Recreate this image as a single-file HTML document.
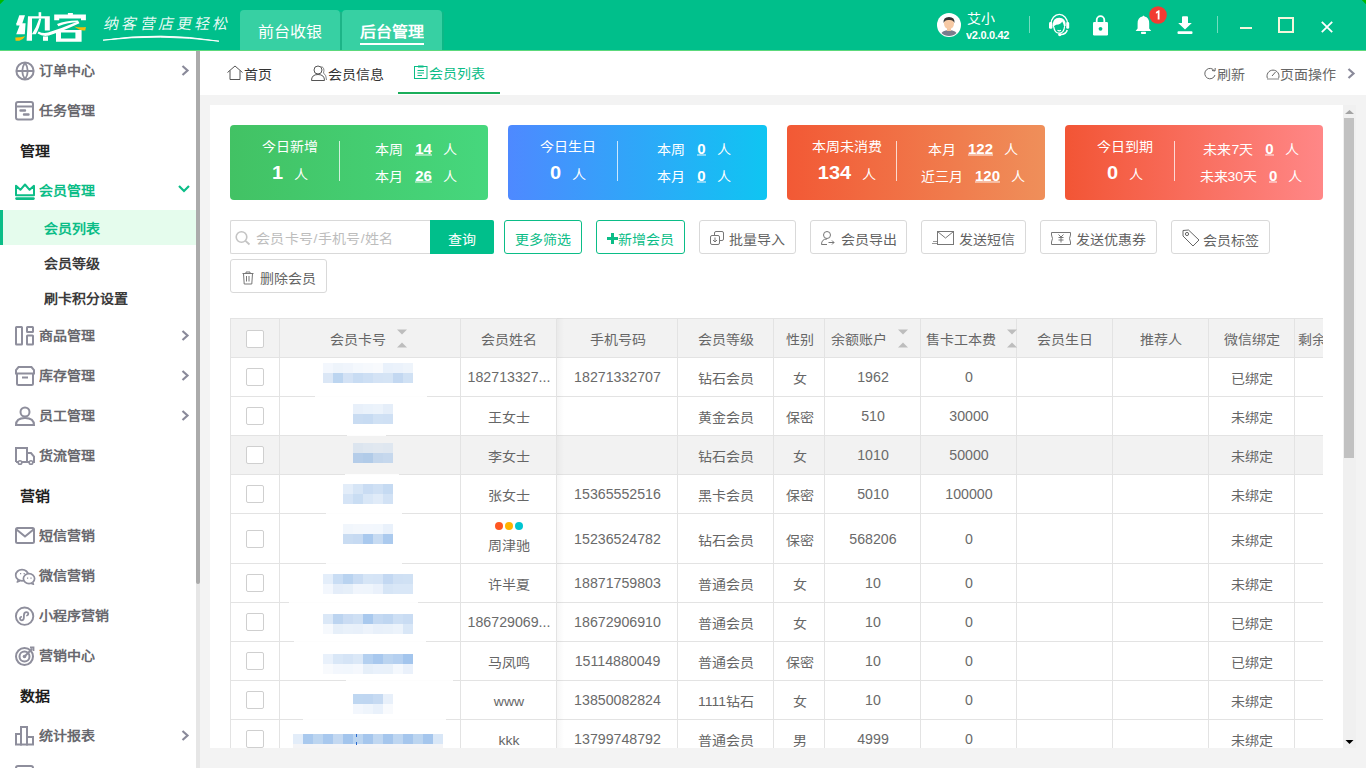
<!DOCTYPE html><html lang="zh-CN"><head><meta charset="utf-8"><title>纳客</title><style>
*{margin:0;padding:0;box-sizing:border-box}
html,body{width:1366px;height:768px;overflow:hidden;background:#f3f3f3;font-family:"Liberation Sans",sans-serif;}
.a{position:absolute}
.t{position:absolute;white-space:nowrap;line-height:20px;height:20px;transform:scaleY(.92)}
.c{text-align:center}
svg{position:absolute;overflow:visible}
</style></head><body>
<div class="a" style="left:0;top:0;width:1366px;height:50px;background:#00bf8b"></div>
<div class="a" style="left:0;top:50px;width:1366px;height:1px;background:#5cd97c"></div>
<svg style="left:0;top:0" width="1366" height="6"><path d="M0 0 H4.2 L0 4.2Z M1366 0 H1361.8 L1366 4.2Z" fill="#00b800"/></svg>
<svg style="left:0;top:0" width="95" height="50" viewBox="0 0 95 50"><path d="M19.3 15.3 H25 L22 24.3 H16.2Z" fill="#fff"/><path d="M16.4 23.2 H25.6 L24.8 34.2 H16.2 L19.6 25.6 H16.4Z" fill="#fff"/><path d="M15.3 37.6 Q20 37.4 25.2 36.2 Q23 39.8 19.3 40.8 H15.6Z" fill="#f5be0b"/><path d="M28 16.3 H49.8 V30.5 H44.8 V18.6 H32 V40.8 H26.6Z" fill="#fff"/><rect x="38.6" y="12.2" width="2.6" height="6" fill="#fff"/><path d="M39.2 18.4 H41.3 Q39.5 28 35.8 34.2 H31.9 Q36.5 27 39.2 18.4Z" fill="#fff"/><path d="M38.5 31.5 Q43 33.8 48 32.6 Q62 28 78.6 21.2 L79.4 23.3 Q63 31 49 35.6 Q43 37.2 37.6 33.6Z" fill="#fff"/><rect x="43" y="36.4" width="5" height="4.4" fill="#fff"/><rect x="67.9" y="13" width="5" height="2.2" fill="#fff"/><path d="M54.2 14.4 H85.9 V20.2 H81 V18.6 H59.2 V20.2 H54.2Z" fill="#fff"/><path d="M57 24 Q66 20.2 78.2 20.4 L77.8 22.3 Q68 22.3 58.4 26.2Z" fill="#fff"/><path d="M56 30 H81.6 V41.7 H56Z M61 32.5 V38.6 H75.4 V32.5Z" fill="#fff" fill-rule="evenodd"/><path d="M74.1 26.4 Q80 27.8 85.9 27 L85.3 30.6 Q80 30 79.1 29.4Z" fill="#f5be0b"/></svg>
<div class="t" style="left:102px;top:13px;height:22px;line-height:22px;font-size:15px;color:rgba(255,255,255,.92);letter-spacing:3.2px;font-family:'Liberation Serif',serif;transform:skewX(-12deg);transform-origin:0 100%">纳客营店更轻松</div>
<svg style="left:0;top:0" width="1" height="1"><path d="M103 40.2 Q160 31.5 219 41.2 Q160 33.6 103 40.2Z" stroke="#fff" stroke-width="0.9" fill="#fff"/></svg>
<div class="a" style="left:240px;top:10px;width:100px;height:40px;background:#37d0a3;border-radius:4px 4px 0 0"></div>
<div class="a" style="left:342px;top:10px;width:100px;height:40px;background:#37d0a3;border-radius:4px 4px 0 0"></div>
<div class="a" style="left:340px;top:12px;width:2px;height:38px;background:#1cb487"></div>
<div class="a" style="left:442px;top:12px;width:2px;height:38px;background:#0cb886"></div>
<div class="t c" style="left:240px;top:21px;width:100px;height:22px;line-height:22px;font-size:16px;color:#fff">前台收银</div>
<div class="t c" style="left:342px;top:21px;width:100px;height:22px;line-height:22px;font-size:16px;color:#fff;font-weight:700">后台管理</div>
<div class="a" style="left:360px;top:43px;width:64px;height:2px;background:#fff"></div>
<svg style="left:937px;top:13px" width="24" height="24" viewBox="0 0 24 24"><circle cx="12" cy="12" r="12" fill="#fff"/><clipPath id="av"><circle cx="12" cy="12" r="11"/></clipPath><g clip-path="url(#av)"><path d="M2 26 Q3 17 12 17 Q21 17 22 26Z" fill="#7a7d8c"/><rect x="10" y="13" width="4" height="5" fill="#f3c5a0"/><ellipse cx="12" cy="10.5" rx="5" ry="5.5" fill="#f6c9a4"/><path d="M6.5 10 Q6 4 12 4 Q18 4 17.5 10 Q16 6.5 12 7 Q8 6.5 6.5 10Z" fill="#333"/></g></svg>
<div class="t" style="left:967px;top:8px;height:20px;line-height:20px;font-size:14px;color:#fff">艾小</div>
<div class="t" style="left:966px;top:28px;height:14px;line-height:14px;font-size:11px;color:#fff;font-weight:700;letter-spacing:-0.3px">v2.0.0.42</div>
<div class="a" style="left:1029px;top:16px;width:1px;height:17px;background:rgba(255,255,255,.45)"></div>
<div class="a" style="left:1217px;top:16px;width:1px;height:17px;background:rgba(255,255,255,.45)"></div>
<svg style="left:1048px;top:13px" width="22" height="24" viewBox="0 0 22 24"><path d="M3 11 A8.3 9.6 0 0 1 19.6 11" stroke="#fff" stroke-width="1.3" fill="none"/><rect x="1" y="9" width="3.4" height="6.8" rx="1.4" fill="#fff"/><rect x="18.2" y="9" width="3" height="6.8" rx="1.4" fill="#fff"/><path d="M4.6 13 Q4.6 4.8 11.2 4.8 Q17.8 4.8 17.8 12.5 L16.2 14.5 Q15.8 11 14.2 8.6 Q13 11.6 8.2 11.8 Q6 12.2 5.6 14.8Z" fill="#fff"/><path d="M5.8 14 Q6.5 20 11.2 20.2 Q15.8 20 16.5 14" stroke="#fff" stroke-width="1.3" fill="none"/><path d="M9.5 17.3 Q11.2 18.4 12.9 17.3" stroke="#fff" stroke-width="1.2" fill="none"/><path d="M19.2 17 Q18.2 21.2 12.5 21.6" stroke="#fff" stroke-width="1.5" fill="none"/><circle cx="11.8" cy="21.6" r="1.7" fill="#fff"/></svg>
<svg style="left:1092px;top:15px" width="17" height="21" viewBox="0 0 17 21"><path d="M4.7 8 V5 A3.8 3.8 0 0 1 12.3 5 V8" stroke="#fff" stroke-width="1.8" fill="none"/><rect x="1" y="7" width="15" height="13.4" rx="1.2" fill="#fff"/><circle cx="8.5" cy="13.8" r="1.9" fill="#00bf8b"/></svg>
<svg style="left:1135px;top:15px" width="17" height="20" viewBox="0 0 17 20"><path d="M8.5 0.6 L9.6 1.6 Q14.2 2.6 14.2 8.5 V13.5 L16.2 15.9 H0.6 L2.6 13.5 V8.5 Q2.6 2.6 7.4 1.6Z" fill="#fff"/><rect x="6" y="16.8" width="5" height="2.2" rx="0.8" fill="#fff"/></svg>
<svg style="left:1148.5px;top:6px" width="18" height="18" viewBox="0 0 18 18"><circle cx="9" cy="9" r="8.8" fill="#f23b32"/><path d="M6.9 6 L9.5 4.3 H10.5 V13.4 H8.7 V6.7 L6.9 7.7Z" fill="#fff"/></svg>
<svg style="left:1177px;top:16px" width="16" height="18" viewBox="0 0 16 18"><path d="M5 1.2 Q5 0.3 6 0.3 H10 Q11 0.3 11 1.2 V7 H14.8 L8 13.6 L1.2 7 H5Z" fill="#fff"/><rect x="0.5" y="15.3" width="15" height="2.8" rx="1" fill="#fff"/></svg>
<div class="a" style="left:1240px;top:27px;width:12px;height:2px;background:#f3f7dc"></div>
<div class="a" style="left:1278px;top:17px;width:16px;height:16px;border:2px solid #f3f7dc"></div>
<svg style="left:1321px;top:21px" width="12" height="12" viewBox="0 0 12 12"><path d="M0.8 0.8 L11.2 11.2 M11.2 0.8 L0.8 11.2" stroke="#fff" stroke-width="1.8"/></svg>
<div class="a" style="left:0;top:51px;width:196px;height:717px;background:#fff"></div>
<div class="a" style="left:196px;top:51px;width:4px;height:717px;background:#e6e6e6"></div>
<div class="a" style="left:196px;top:51px;width:4px;height:533px;background:#ababab;border-radius:0 0 2px 2px"></div>
<svg style="left:15px;top:61px" width="20" height="20" viewBox="0 0 20 20"><circle cx="10" cy="10" r="8.6" stroke="#8e8e9c" stroke-width="2" fill="none"/><path d="M1.5 10 H18.5 M10 1.5 Q4.5 10 10 18.5 M10 1.5 Q15.5 10 10 18.5" stroke="#8e8e9c" stroke-width="1.8" fill="none"/></svg>
<div class="t" style="left:39px;top:60px;font-size:14px;font-weight:700;color:#68686e">订单中心</div>
<svg style="left:181px;top:65px" width="9" height="11" viewBox="0 0 9 11"><path d="M1.5 1 L6.5 5.5 L1.5 10" stroke="#8a8a9a" stroke-width="2.2" fill="none"/></svg>
<svg style="left:15px;top:101px" width="20" height="20" viewBox="0 0 20 20"><rect x="1" y="1" width="17" height="17.5" rx="2" stroke="#8e8e9c" stroke-width="2" fill="none"/><path d="M1 5.5 H18" stroke="#8e8e9c" stroke-width="2"/><path d="M5.5 9.5 H10 M9 13.5 H13.5" stroke="#8e8e9c" stroke-width="2.4" stroke-linecap="round"/></svg>
<div class="t" style="left:39px;top:100px;font-size:14px;font-weight:700;color:#68686e">任务管理</div>
<div class="t" style="left:20px;top:141px;font-size:15px;font-weight:700;color:#1e1e1e;transform:scaleY(.88);transform-origin:0 17px">管理</div>
<svg style="left:15px;top:183px" width="20" height="20" viewBox="0 0 20 20"><path d="M1 12.2 V2.8 L5.4 6.8 L10 1.5 L14.6 6.8 L19 2.8 V12.2Z" stroke="#0bbd87" stroke-width="2" fill="none" stroke-linejoin="round"/><rect x="0.2" y="14.2" width="19.6" height="2.7" rx="1.3" fill="#0bbd87"/></svg>
<div class="t" style="left:39px;top:180px;font-size:14px;font-weight:700;color:#0bbd87">会员管理</div>
<svg style="left:178px;top:185px" width="12" height="8" viewBox="0 0 12 8"><path d="M1 1 L6 6 L11 1" stroke="#0bbd87" stroke-width="2.2" fill="none"/></svg>
<div class="a" style="left:0;top:210px;width:196px;height:35px;background:#e5fced"></div>
<div class="a" style="left:0;top:210px;width:3px;height:35px;background:#0bbd87"></div>
<div class="t" style="left:44px;top:218px;font-size:14px;font-weight:700;color:#0bbd87">会员列表</div>
<div class="t" style="left:44px;top:253px;font-size:14px;font-weight:700;color:#3a3a3a">会员等级</div>
<div class="t" style="left:44px;top:288px;font-size:14px;font-weight:700;color:#3a3a3a">刷卡积分设置</div>
<svg style="left:15px;top:326px" width="20" height="20" viewBox="0 0 20 20"><rect x="1" y="1" width="6" height="17.5" rx="0.5" stroke="#8e8e9c" stroke-width="2" fill="none"/><rect x="12" y="1" width="6" height="5" rx="0.5" stroke="#8e8e9c" stroke-width="2" fill="none"/><rect x="12" y="9.5" width="6" height="9" rx="0.5" stroke="#8e8e9c" stroke-width="2" fill="none"/></svg>
<div class="t" style="left:39px;top:325px;font-size:14px;font-weight:700;color:#68686e">商品管理</div>
<svg style="left:181px;top:330px" width="9" height="11" viewBox="0 0 9 11"><path d="M1.5 1 L6.5 5.5 L1.5 10" stroke="#8a8a9a" stroke-width="2.2" fill="none"/></svg>
<svg style="left:15px;top:366px" width="20" height="20" viewBox="0 0 20 20"><path d="M2 7 V17.5 Q2 19 3.5 19 H16.5 Q18 19 18 17.5 V7" stroke="#8e8e9c" stroke-width="2" fill="none"/><path d="M1 7.5 V4 L3.5 1 H16.5 L19 4 V7.5Z" stroke="#8e8e9c" stroke-width="2" fill="none"/><path d="M7 11.5 H13" stroke="#8e8e9c" stroke-width="2"/></svg>
<div class="t" style="left:39px;top:365px;font-size:14px;font-weight:700;color:#68686e">库存管理</div>
<svg style="left:181px;top:370px" width="9" height="11" viewBox="0 0 9 11"><path d="M1.5 1 L6.5 5.5 L1.5 10" stroke="#8a8a9a" stroke-width="2.2" fill="none"/></svg>
<svg style="left:15px;top:406px" width="20" height="20" viewBox="0 0 20 20"><circle cx="10" cy="6" r="4.5" stroke="#8e8e9c" stroke-width="2" fill="none"/><path d="M1 19 Q1 12 10 12 Q19 12 19 19Z" stroke="#8e8e9c" stroke-width="2" fill="none"/></svg>
<div class="t" style="left:39px;top:405px;font-size:14px;font-weight:700;color:#68686e">员工管理</div>
<svg style="left:181px;top:410px" width="9" height="11" viewBox="0 0 9 11"><path d="M1.5 1 L6.5 5.5 L1.5 10" stroke="#8a8a9a" stroke-width="2.2" fill="none"/></svg>
<svg style="left:15px;top:446px" width="20" height="20" viewBox="0 0 20 20"><path d="M1 16 V2 H12 V16" stroke="#8e8e9c" stroke-width="2" fill="none"/><path d="M12 7 H16 L19 10.5 V16 H17" stroke="#8e8e9c" stroke-width="2" fill="none"/><path d="M1 16 H3 M7 16 H14" stroke="#8e8e9c" stroke-width="2"/><circle cx="5" cy="16.5" r="1.8" stroke="#8e8e9c" stroke-width="1.6" fill="none"/><circle cx="16" cy="16.5" r="1.8" stroke="#8e8e9c" stroke-width="1.6" fill="none"/></svg>
<div class="t" style="left:39px;top:445px;font-size:14px;font-weight:700;color:#68686e">货流管理</div>
<div class="t" style="left:20px;top:486px;font-size:15px;font-weight:700;color:#1e1e1e;transform:scaleY(.88);transform-origin:0 17px">营销</div>
<svg style="left:15px;top:526px" width="20" height="20" viewBox="0 0 20 20"><rect x="1" y="2" width="18" height="15" rx="1.5" stroke="#8e8e9c" stroke-width="2" fill="none"/><path d="M1.5 3.5 L10 10.5 L18.5 3.5" stroke="#8e8e9c" stroke-width="2" fill="none"/></svg>
<div class="t" style="left:39px;top:525px;font-size:14px;font-weight:700;color:#68686e">短信营销</div>
<svg style="left:15px;top:566px" width="20" height="20" viewBox="0 0 20 20"><path d="M3.2 14.2 L2.2 16 L5 14.8" stroke="#8e8e9c" stroke-width="1.5" fill="none" stroke-linejoin="round"/><ellipse cx="7" cy="9.2" rx="6.3" ry="5.6" stroke="#8e8e9c" stroke-width="1.7" fill="#fff"/><ellipse cx="14" cy="12.6" rx="5.6" ry="5" stroke="#8e8e9c" stroke-width="1.7" fill="#fff"/><path d="M17.5 16.5 L18.5 18.3 L15.8 17.4" stroke="#8e8e9c" stroke-width="1.5" fill="#fff" stroke-linejoin="round"/><path d="M5 7.6 H6.2 M8.6 7.6 H9.8 M12 12.2 H13.2 M15.4 12.2 H16.6" stroke="#8e8e9c" stroke-width="1.2"/></svg>
<div class="t" style="left:39px;top:565px;font-size:14px;font-weight:700;color:#68686e">微信营销</div>
<svg style="left:15px;top:606px" width="20" height="20" viewBox="0 0 20 20"><circle cx="9.6" cy="10.2" r="8.7" stroke="#8e8e9c" stroke-width="1.9" fill="none"/><path d="M6.2 10.8 C4.4 11.2 4.6 14.3 6.6 14.3 C8.4 14.3 8.9 12.8 8.9 11.2 V9.4 C8.9 7.6 9.7 6.2 11.6 6.2 C13.6 6.2 14 9 12 9.5" stroke="#8e8e9c" stroke-width="1.8" fill="none" stroke-linecap="round"/></svg>
<div class="t" style="left:39px;top:605px;font-size:14px;font-weight:700;color:#68686e">小程序营销</div>
<svg style="left:15px;top:646px" width="20" height="20" viewBox="0 0 20 20"><circle cx="9.5" cy="10.5" r="8.5" stroke="#8e8e9c" stroke-width="2" fill="none"/><circle cx="9.5" cy="10.5" r="5" stroke="#8e8e9c" stroke-width="2" fill="none"/><circle cx="9.5" cy="10.5" r="1.8" fill="#8e8e9c"/><path d="M9.5 10.5 L17 3 M15 1.5 L18.5 1.5 L18.5 5" stroke="#8e8e9c" stroke-width="1.8" fill="none"/></svg>
<div class="t" style="left:39px;top:645px;font-size:14px;font-weight:700;color:#68686e">营销中心</div>
<div class="t" style="left:20px;top:686px;font-size:15px;font-weight:700;color:#1e1e1e;transform:scaleY(.88);transform-origin:0 17px">数据</div>
<svg style="left:15px;top:726px" width="20" height="20" viewBox="0 0 20 20"><rect x="1" y="8" width="5" height="10.5" stroke="#8e8e9c" stroke-width="2" fill="none"/><rect x="6" y="1" width="6" height="17.5" stroke="#8e8e9c" stroke-width="2" fill="none"/><rect x="12" y="11" width="6" height="7.5" stroke="#8e8e9c" stroke-width="2" fill="none"/></svg>
<div class="t" style="left:39px;top:725px;font-size:14px;font-weight:700;color:#68686e">统计报表</div>
<svg style="left:181px;top:730px" width="9" height="11" viewBox="0 0 9 11"><path d="M1.5 1 L6.5 5.5 L1.5 10" stroke="#8a8a9a" stroke-width="2.2" fill="none"/></svg>
<svg style="left:15px;top:765px" width="20" height="20" viewBox="0 0 20 20"><rect x="1" y="1" width="17" height="17.5" rx="2" stroke="#8e8e9c" stroke-width="2" fill="none"/><path d="M1 5.5 H18" stroke="#8e8e9c" stroke-width="2"/><path d="M5.5 9.5 H10 M9 13.5 H13.5" stroke="#8e8e9c" stroke-width="2.4" stroke-linecap="round"/></svg>
<div class="a" style="left:200px;top:51px;width:1166px;height:44px;background:#fff"></div>
<svg style="left:227px;top:65px" width="16" height="15" viewBox="0 0 16 15"><path d="M0.5 7.5 L8 1 L15.5 7.5 M3 5.5 V14.5 H13 V5.5" stroke="#555" stroke-width="1" fill="none"/></svg>
<div class="t" style="left:244px;top:64px;font-size:14px;color:#333">首页</div>
<svg style="left:311px;top:65px" width="16" height="16" viewBox="0 0 16 16"><circle cx="7" cy="5" r="4" stroke="#555" stroke-width="1" fill="none"/><path d="M0.5 15.5 Q0.5 9.5 7 9.5 Q13.5 9.5 13.5 15.5Z" stroke="#555" stroke-width="1" fill="none"/><path d="M10.5 1.5 Q14 3 12.5 8 Q15.5 10 15.5 15" stroke="#777" stroke-width="0.9" fill="none"/></svg>
<div class="t" style="left:328px;top:64px;font-size:14px;color:#333">会员信息</div>
<svg style="left:414px;top:65px" width="14" height="14" viewBox="0 0 14 14"><rect x="0.5" y="1.5" width="12.5" height="12" stroke="#0bbd87" stroke-width="1" fill="none"/><rect x="4" y="0.5" width="5.5" height="2" fill="#0bbd87"/><path d="M3.5 5.5 H10 M3.5 8 H10 M3.5 10.5 H8" stroke="#0bbd87" stroke-width="1"/></svg>
<div class="t" style="left:429px;top:63px;font-size:14px;color:#0bbd87">会员列表</div>
<div class="a" style="left:398px;top:92px;width:102px;height:2px;background:#1aad5a"></div>
<svg style="left:1204px;top:67px" width="12" height="13" viewBox="0 0 12 13"><path d="M10.5 4 A5.2 5.2 0 1 0 11 8" stroke="#666" stroke-width="1" fill="none"/><path d="M8 3.5 L11 4 L11.2 1" stroke="#666" stroke-width="1" fill="none"/></svg>
<div class="t" style="left:1217px;top:64px;font-size:14px;color:#666">刷新</div>
<svg style="left:1266px;top:68px" width="14" height="12" viewBox="0 0 14 12"><path d="M1.5 10.5 A6 6 0 1 1 12.5 10.5" stroke="#666" stroke-width="1" fill="none"/><path d="M1 11 H13" stroke="#aaa" stroke-width="1.4"/><path d="M6 8 L9.5 4" stroke="#666" stroke-width="1"/></svg>
<div class="t" style="left:1280px;top:64px;font-size:14px;color:#666">页面操作</div>
<svg style="left:1347px;top:68px" width="9" height="11" viewBox="0 0 9 11"><path d="M1.5 1 L6.5 5.5 L1.5 10" stroke="#8a8a9a" stroke-width="2.2" fill="none"/></svg>
<div class="a" style="left:210px;top:105px;width:1133px;height:643px;background:#fff"></div>
<div class="a" style="left:1343px;top:105px;width:13px;height:643px;background:#f0f0f0"></div>
<svg style="left:1343px;top:105px" width="13" height="13" viewBox="0 0 13 13"><path d="M2 9 L6.5 5 L11 9Z" fill="#a3a3a3"/></svg>
<div class="a" style="left:1344px;top:118px;width:10px;height:340px;background:#c1c1c1"></div>
<svg style="left:1343px;top:736px" width="13" height="12" viewBox="0 0 13 12"><path d="M2.5 4 L6.5 8 L10.5 4Z" fill="#000"/></svg>
<div class="a" style="left:230px;top:125px;width:258px;height:75px;border-radius:4px;background:linear-gradient(90deg,#42c264,#46d77d)"></div>
<div class="t c" style="left:230px;top:136px;width:120px;font-size:14px;color:#fff">今日新增</div>
<div class="t c" style="left:230px;top:161px;width:120px;height:24px;line-height:24px;font-size:14px;color:#fff"><b style="font-size:20px;margin-right:11px">1</b>人</div>
<div class="a" style="left:339px;top:141px;width:1px;height:40px;background:rgba(255,255,255,.75)"></div>
<div class="t c" style="left:336px;top:139px;width:160px;font-size:14px;color:#fff">本周<b style="display:inline-block;margin:0 11px 0 12px;border-bottom:1px solid #fff;line-height:13px;font-size:15px">14</b>人</div>
<div class="t c" style="left:336px;top:166px;width:160px;font-size:14px;color:#fff">本月<b style="display:inline-block;margin:0 11px 0 12px;border-bottom:1px solid #fff;line-height:13px;font-size:15px">26</b>人</div>
<div class="a" style="left:508px;top:125px;width:259px;height:75px;border-radius:4px;background:linear-gradient(90deg,#4e89ff,#0fc5f2)"></div>
<div class="t c" style="left:508px;top:136px;width:120px;font-size:14px;color:#fff">今日生日</div>
<div class="t c" style="left:508px;top:161px;width:120px;height:24px;line-height:24px;font-size:14px;color:#fff"><b style="font-size:20px;margin-right:11px">0</b>人</div>
<div class="a" style="left:617px;top:141px;width:1px;height:40px;background:rgba(255,255,255,.75)"></div>
<div class="t c" style="left:614px;top:139px;width:160px;font-size:14px;color:#fff">本周<b style="display:inline-block;margin:0 11px 0 12px;border-bottom:1px solid #fff;line-height:13px;font-size:15px">0</b>人</div>
<div class="t c" style="left:614px;top:166px;width:160px;font-size:14px;color:#fff">本月<b style="display:inline-block;margin:0 11px 0 12px;border-bottom:1px solid #fff;line-height:13px;font-size:15px">0</b>人</div>
<div class="a" style="left:787px;top:125px;width:258px;height:75px;border-radius:4px;background:linear-gradient(90deg,#f25935,#ef8f5a)"></div>
<div class="t c" style="left:787px;top:136px;width:120px;font-size:14px;color:#fff">本周未消费</div>
<div class="t c" style="left:787px;top:161px;width:120px;height:24px;line-height:24px;font-size:14px;color:#fff"><b style="font-size:20px;margin-right:11px">134</b>人</div>
<div class="a" style="left:896px;top:141px;width:1px;height:40px;background:rgba(255,255,255,.75)"></div>
<div class="t c" style="left:893px;top:139px;width:160px;font-size:14px;color:#fff">本月<b style="display:inline-block;margin:0 11px 0 12px;border-bottom:1px solid #fff;line-height:13px;font-size:15px">122</b>人</div>
<div class="t c" style="left:893px;top:166px;width:160px;font-size:14px;color:#fff">近三月<b style="display:inline-block;margin:0 11px 0 12px;border-bottom:1px solid #fff;line-height:13px;font-size:15px">120</b>人</div>
<div class="a" style="left:1065px;top:125px;width:258px;height:75px;border-radius:4px;background:linear-gradient(90deg,#f25535,#ff8787)"></div>
<div class="t c" style="left:1065px;top:136px;width:120px;font-size:14px;color:#fff">今日到期</div>
<div class="t c" style="left:1065px;top:161px;width:120px;height:24px;line-height:24px;font-size:14px;color:#fff"><b style="font-size:20px;margin-right:11px">0</b>人</div>
<div class="a" style="left:1174px;top:141px;width:1px;height:40px;background:rgba(255,255,255,.75)"></div>
<div class="t c" style="left:1171px;top:139px;width:160px;font-size:14px;color:#fff">未来7天<b style="display:inline-block;margin:0 11px 0 12px;border-bottom:1px solid #fff;line-height:13px;font-size:15px">0</b>人</div>
<div class="t c" style="left:1171px;top:166px;width:160px;font-size:14px;color:#fff">未来30天<b style="display:inline-block;margin:0 11px 0 12px;border-bottom:1px solid #fff;line-height:13px;font-size:15px">0</b>人</div>
<div class="a" style="left:230px;top:220px;width:200px;height:34px;border:1px solid #d9d9d9;border-right:none;border-radius:2px 0 0 2px;background:#fff"></div>
<svg style="left:235px;top:231px" width="16" height="14" viewBox="0 0 16 14"><circle cx="6.5" cy="6" r="5.3" stroke="#c4c4c4" stroke-width="1.6" fill="none"/><path d="M10.5 9.8 L14.5 13.5" stroke="#c4c4c4" stroke-width="1.8"/></svg>
<div class="t" style="left:256px;top:228px;font-size:14px;color:#bdbdbd;letter-spacing:0.35px">会员卡号/手机号/姓名</div>
<div class="a" style="left:430px;top:220px;width:64px;height:34px;background:#00bf8b;border-radius:0 2px 2px 0"></div>
<div class="t c" style="left:430px;top:229px;width:64px;font-size:14px;color:#fff;font-weight:500">查询</div>
<div class="a" style="left:504px;top:220px;width:78px;height:34px;border:1px solid #0bbd87;border-radius:3px"></div>
<div class="t" style="left:515px;top:229px;font-size:14px;color:#0bbd87">更多筛选</div>
<div class="a" style="left:596px;top:220px;width:89px;height:34px;border:1px solid #0bbd87;border-radius:3px"></div>
<svg style="left:607px;top:233px" width="11" height="11" viewBox="0 0 11 11"><path d="M5.5 0 V11 M0 5.5 H11" stroke="#0bbd87" stroke-width="3"/></svg>
<div class="t" style="left:618px;top:229px;font-size:14px;color:#0bbd87">新增会员</div>
<div class="a" style="left:699px;top:220px;width:97px;height:34px;border:1px solid #d9d9d9;border-radius:3px"></div>
<svg style="left:710px;top:231px" width="14" height="14" viewBox="0 0 14 14"><rect x="4.5" y="0.5" width="9" height="9" rx="1.5" stroke="#777" fill="#fff"/><rect x="0.5" y="4.5" width="9" height="9" rx="1.5" stroke="#777" fill="#fff"/><path d="M5 6.5 V11 M3 9 L5 11 L7 9" stroke="#777" fill="none"/></svg>
<div class="t" style="left:729px;top:229px;font-size:14px;color:#626262">批量导入</div>
<div class="a" style="left:810px;top:220px;width:97px;height:34px;border:1px solid #d9d9d9;border-radius:3px"></div>
<svg style="left:821px;top:231px" width="14" height="14" viewBox="0 0 14 14"><circle cx="6" cy="4" r="3.5" stroke="#777" fill="none"/><path d="M0.5 13.5 Q0.5 8 6 8 M0.5 13.5 H6 M7.5 11.5 H13 M11 9.5 L13 11.5 L11 13.5" stroke="#777" fill="none"/></svg>
<div class="t" style="left:841px;top:229px;font-size:14px;color:#626262">会员导出</div>
<div class="a" style="left:921px;top:220px;width:105px;height:34px;border:1px solid #d9d9d9;border-radius:3px"></div>
<svg style="left:932px;top:231px" width="22" height="14" viewBox="0 0 22 14"><rect x="5.5" y="0.5" width="16" height="13" stroke="#777" fill="none"/><path d="M5.5 0.5 L13.5 7 L21.5 0.5" stroke="#777" fill="none"/><path d="M1 10.5 H5 M0 12.5 H5" stroke="#999"/></svg>
<div class="t" style="left:959px;top:229px;font-size:14px;color:#626262">发送短信</div>
<div class="a" style="left:1040px;top:220px;width:117px;height:34px;border:1px solid #d9d9d9;border-radius:3px"></div>
<svg style="left:1051px;top:232px" width="20" height="13" viewBox="0 0 20 13"><path d="M0.5 0.5 H19.5 V3 Q17.5 6.5 19.5 10 V12.5 H0.5 V10 Q2.5 6.5 0.5 3Z" stroke="#777" fill="none"/><path d="M7.5 2.5 L10 5 L12.5 2.5 M10 5 V10.5 M7.5 5.5 H12.5 M7.5 8 H12.5" stroke="#777" fill="none"/></svg>
<div class="t" style="left:1076px;top:229px;font-size:14px;color:#626262">发送优惠券</div>
<div class="a" style="left:1171px;top:220px;width:99px;height:34px;border:1px solid #d9d9d9;border-radius:3px"></div>
<svg style="left:1182px;top:229px" width="18" height="18" viewBox="0 0 18 18"><path d="M1 1.5 L6.5 1 L17 11 L11 17 L1 7Z" stroke="#666" fill="none"/><circle cx="5" cy="5" r="1.6" stroke="#666" fill="none"/></svg>
<div class="t" style="left:1203px;top:230px;font-size:14px;color:#626262">会员标签</div>
<div class="a" style="left:230px;top:259px;width:97px;height:34px;border:1px solid #d9d9d9;border-radius:3px"></div>
<svg style="left:242px;top:271px" width="12" height="14" viewBox="0 0 12 14"><path d="M0.5 2.5 H11.5 M4 2.5 V1 H8 V2.5 M1.5 2.5 L2.2 13 H9.8 L10.5 2.5 M4.5 5 V10.5 M7 5 V10.5" stroke="#777" fill="none"/></svg>
<div class="t" style="left:260px;top:268px;font-size:14px;color:#626262">删除会员</div>
<div class="a" style="left:230px;top:318px;width:1093px;height:430px;overflow:hidden">
<div class="a" style="left:0px;top:0px;width:1093px;height:40px;background:#f2f2f2"></div>
<div class="a" style="left:0px;top:118px;width:1093px;height:38px;background:#f2f2f2"></div>
<div class="a" style="left:0px;top:0px;width:1093px;height:1px;background:#e3e3e3"></div>
<div class="a" style="left:0px;top:39px;width:1093px;height:1px;background:#e3e3e3"></div>
<div class="a" style="left:0px;top:78px;width:1093px;height:1px;background:#e3e3e3"></div>
<div class="a" style="left:0px;top:117px;width:1093px;height:1px;background:#e3e3e3"></div>
<div class="a" style="left:0px;top:156px;width:1093px;height:1px;background:#e3e3e3"></div>
<div class="a" style="left:0px;top:195px;width:1093px;height:1px;background:#e3e3e3"></div>
<div class="a" style="left:0px;top:245px;width:1093px;height:1px;background:#e3e3e3"></div>
<div class="a" style="left:0px;top:284px;width:1093px;height:1px;background:#e3e3e3"></div>
<div class="a" style="left:0px;top:323px;width:1093px;height:1px;background:#e3e3e3"></div>
<div class="a" style="left:0px;top:362px;width:1093px;height:1px;background:#e3e3e3"></div>
<div class="a" style="left:0px;top:401px;width:1093px;height:1px;background:#e3e3e3"></div>
<div class="a" style="left:0px;top:440px;width:1093px;height:1px;background:#e3e3e3"></div>
<div class="a" style="left:0px;top:0px;width:1px;height:440px;background:#e3e3e3"></div>
<div class="a" style="left:49px;top:0px;width:1px;height:440px;background:#e3e3e3"></div>
<div class="a" style="left:230px;top:0px;width:1px;height:440px;background:#e3e3e3"></div>
<div class="a" style="left:326px;top:0px;width:1px;height:440px;background:#e3e3e3"></div>
<div class="a" style="left:447px;top:0px;width:1px;height:440px;background:#e3e3e3"></div>
<div class="a" style="left:543px;top:0px;width:1px;height:440px;background:#e3e3e3"></div>
<div class="a" style="left:594px;top:0px;width:1px;height:440px;background:#e3e3e3"></div>
<div class="a" style="left:690px;top:0px;width:1px;height:440px;background:#e3e3e3"></div>
<div class="a" style="left:786px;top:0px;width:1px;height:440px;background:#e3e3e3"></div>
<div class="a" style="left:882px;top:0px;width:1px;height:440px;background:#e3e3e3"></div>
<div class="a" style="left:978px;top:0px;width:1px;height:440px;background:#e3e3e3"></div>
<div class="a" style="left:1064px;top:0px;width:1px;height:440px;background:#e3e3e3"></div>
<div class="a" style="left:327px;top:0;width:7px;height:430px;background:linear-gradient(90deg,rgba(0,0,0,.035),rgba(0,0,0,0))"></div>
<div class="t" style="left:100px;top:11px;font-size:14px;color:#666">会员卡号</div>
<div class="t c" style="left:231px;top:11px;width:96px;font-size:14px;color:#666;">会员姓名</div>
<div class="t c" style="left:327px;top:11px;width:121px;font-size:14px;color:#666;">手机号码</div>
<div class="t c" style="left:448px;top:11px;width:96px;font-size:14px;color:#666;">会员等级</div>
<div class="t c" style="left:544px;top:11px;width:51px;font-size:14px;color:#666;">性别</div>
<div class="t" style="left:601px;top:11px;font-size:14px;color:#666">余额账户</div>
<div class="t" style="left:696px;top:11px;font-size:14px;color:#666">售卡工本费</div>
<div class="t c" style="left:787px;top:11px;width:96px;font-size:14px;color:#666;">会员生日</div>
<div class="t c" style="left:883px;top:11px;width:96px;font-size:14px;color:#666;">推荐人</div>
<div class="t c" style="left:979px;top:11px;width:86px;font-size:14px;color:#666;">微信绑定</div>
<div class="t" style="left:1068px;top:11px;font-size:14px;color:#666">剩余次数</div>
<div class="a" style="left:16px;top:12px;width:18px;height:18px;border:1px solid #cfcfcf;border-radius:2px;background:#fff"></div>
<div class="a" style="left:16px;top:50px;width:18px;height:18px;border:1px solid #cfcfcf;border-radius:2px;background:#fff"></div>
<div class="t c" style="left:231px;top:50px;width:96px;font-size:14px;color:#6a6a6a;font-size:15.5px;transform:scaleX(0.915);margin-top:-1px">182713327...</div>
<div class="t c" style="left:327px;top:50px;width:121px;font-size:14px;color:#6a6a6a;font-size:15.5px;transform:scaleX(0.915);margin-top:-1px">18271332707</div>
<div class="t c" style="left:448px;top:50px;width:96px;font-size:14px;color:#666;">钻石会员</div>
<div class="t c" style="left:544px;top:50px;width:51px;font-size:14px;color:#666;">女</div>
<div class="t c" style="left:595px;top:50px;width:96px;font-size:14px;color:#6a6a6a;font-size:15.5px;transform:scaleX(0.915);margin-top:-1px">1962</div>
<div class="t c" style="left:691px;top:50px;width:96px;font-size:14px;color:#6a6a6a;font-size:15.5px;transform:scaleX(0.915);margin-top:-1px">0</div>
<div class="t c" style="left:979px;top:50px;width:86px;font-size:14px;color:#666;">已绑定</div>
<div class="a" style="left:16px;top:89px;width:18px;height:18px;border:1px solid #cfcfcf;border-radius:2px;background:#fff"></div>
<div class="t c" style="left:231px;top:89px;width:96px;font-size:14px;color:#666;">王女士</div>
<div class="t c" style="left:448px;top:89px;width:96px;font-size:14px;color:#666;">黄金会员</div>
<div class="t c" style="left:544px;top:89px;width:51px;font-size:14px;color:#666;">保密</div>
<div class="t c" style="left:595px;top:89px;width:96px;font-size:14px;color:#6a6a6a;font-size:15.5px;transform:scaleX(0.915);margin-top:-1px">510</div>
<div class="t c" style="left:691px;top:89px;width:96px;font-size:14px;color:#6a6a6a;font-size:15.5px;transform:scaleX(0.915);margin-top:-1px">30000</div>
<div class="t c" style="left:979px;top:89px;width:86px;font-size:14px;color:#666;">未绑定</div>
<div class="a" style="left:16px;top:128px;width:18px;height:18px;border:1px solid #cfcfcf;border-radius:2px;background:#fff"></div>
<div class="t c" style="left:231px;top:128px;width:96px;font-size:14px;color:#666;">李女士</div>
<div class="t c" style="left:448px;top:128px;width:96px;font-size:14px;color:#666;">钻石会员</div>
<div class="t c" style="left:544px;top:128px;width:51px;font-size:14px;color:#666;">女</div>
<div class="t c" style="left:595px;top:128px;width:96px;font-size:14px;color:#6a6a6a;font-size:15.5px;transform:scaleX(0.915);margin-top:-1px">1010</div>
<div class="t c" style="left:691px;top:128px;width:96px;font-size:14px;color:#6a6a6a;font-size:15.5px;transform:scaleX(0.915);margin-top:-1px">50000</div>
<div class="t c" style="left:979px;top:128px;width:86px;font-size:14px;color:#666;">未绑定</div>
<div class="a" style="left:16px;top:167px;width:18px;height:18px;border:1px solid #cfcfcf;border-radius:2px;background:#fff"></div>
<div class="t c" style="left:231px;top:167px;width:96px;font-size:14px;color:#666;">张女士</div>
<div class="t c" style="left:327px;top:167px;width:121px;font-size:14px;color:#6a6a6a;font-size:15.5px;transform:scaleX(0.915);margin-top:-1px">15365552516</div>
<div class="t c" style="left:448px;top:167px;width:96px;font-size:14px;color:#666;">黑卡会员</div>
<div class="t c" style="left:544px;top:167px;width:51px;font-size:14px;color:#666;">保密</div>
<div class="t c" style="left:595px;top:167px;width:96px;font-size:14px;color:#6a6a6a;font-size:15.5px;transform:scaleX(0.915);margin-top:-1px">5010</div>
<div class="t c" style="left:691px;top:167px;width:96px;font-size:14px;color:#6a6a6a;font-size:15.5px;transform:scaleX(0.915);margin-top:-1px">100000</div>
<div class="t c" style="left:979px;top:167px;width:86px;font-size:14px;color:#666;">未绑定</div>
<div class="a" style="left:16px;top:212px;width:18px;height:18px;border:1px solid #cfcfcf;border-radius:2px;background:#fff"></div>
<div class="t c" style="left:231px;top:212px;width:96px;font-size:14px;color:#666;margin-top:5px">周津驰</div>
<div class="a" style="left:265px;top:204px;width:8px;height:8px;border-radius:50%;background:#ff5722"></div>
<div class="a" style="left:275px;top:204px;width:8px;height:8px;border-radius:50%;background:#ffb300"></div>
<div class="a" style="left:285px;top:204px;width:8px;height:8px;border-radius:50%;background:#00c5d1"></div>
<div class="t c" style="left:327px;top:212px;width:121px;font-size:14px;color:#6a6a6a;font-size:15.5px;transform:scaleX(0.915);margin-top:-1px">15236524782</div>
<div class="t c" style="left:448px;top:212px;width:96px;font-size:14px;color:#666;">钻石会员</div>
<div class="t c" style="left:544px;top:212px;width:51px;font-size:14px;color:#666;">保密</div>
<div class="t c" style="left:595px;top:212px;width:96px;font-size:14px;color:#6a6a6a;font-size:15.5px;transform:scaleX(0.915);margin-top:-1px">568206</div>
<div class="t c" style="left:691px;top:212px;width:96px;font-size:14px;color:#6a6a6a;font-size:15.5px;transform:scaleX(0.915);margin-top:-1px">0</div>
<div class="t c" style="left:979px;top:212px;width:86px;font-size:14px;color:#666;">未绑定</div>
<div class="a" style="left:16px;top:256px;width:18px;height:18px;border:1px solid #cfcfcf;border-radius:2px;background:#fff"></div>
<div class="t c" style="left:231px;top:256px;width:96px;font-size:14px;color:#666;">许半夏</div>
<div class="t c" style="left:327px;top:256px;width:121px;font-size:14px;color:#6a6a6a;font-size:15.5px;transform:scaleX(0.915);margin-top:-1px">18871759803</div>
<div class="t c" style="left:448px;top:256px;width:96px;font-size:14px;color:#666;">普通会员</div>
<div class="t c" style="left:544px;top:256px;width:51px;font-size:14px;color:#666;">女</div>
<div class="t c" style="left:595px;top:256px;width:96px;font-size:14px;color:#6a6a6a;font-size:15.5px;transform:scaleX(0.915);margin-top:-1px">10</div>
<div class="t c" style="left:691px;top:256px;width:96px;font-size:14px;color:#6a6a6a;font-size:15.5px;transform:scaleX(0.915);margin-top:-1px">0</div>
<div class="t c" style="left:979px;top:256px;width:86px;font-size:14px;color:#666;">未绑定</div>
<div class="a" style="left:16px;top:295px;width:18px;height:18px;border:1px solid #cfcfcf;border-radius:2px;background:#fff"></div>
<div class="t c" style="left:231px;top:295px;width:96px;font-size:14px;color:#6a6a6a;font-size:15.5px;transform:scaleX(0.915);margin-top:-1px">186729069...</div>
<div class="t c" style="left:327px;top:295px;width:121px;font-size:14px;color:#6a6a6a;font-size:15.5px;transform:scaleX(0.915);margin-top:-1px">18672906910</div>
<div class="t c" style="left:448px;top:295px;width:96px;font-size:14px;color:#666;">普通会员</div>
<div class="t c" style="left:544px;top:295px;width:51px;font-size:14px;color:#666;">女</div>
<div class="t c" style="left:595px;top:295px;width:96px;font-size:14px;color:#6a6a6a;font-size:15.5px;transform:scaleX(0.915);margin-top:-1px">10</div>
<div class="t c" style="left:691px;top:295px;width:96px;font-size:14px;color:#6a6a6a;font-size:15.5px;transform:scaleX(0.915);margin-top:-1px">0</div>
<div class="t c" style="left:979px;top:295px;width:86px;font-size:14px;color:#666;">已绑定</div>
<div class="a" style="left:16px;top:334px;width:18px;height:18px;border:1px solid #cfcfcf;border-radius:2px;background:#fff"></div>
<div class="t c" style="left:231px;top:334px;width:96px;font-size:14px;color:#666;">马凤鸣</div>
<div class="t c" style="left:327px;top:334px;width:121px;font-size:14px;color:#6a6a6a;font-size:15.5px;transform:scaleX(0.915);margin-top:-1px">15114880049</div>
<div class="t c" style="left:448px;top:334px;width:96px;font-size:14px;color:#666;">普通会员</div>
<div class="t c" style="left:544px;top:334px;width:51px;font-size:14px;color:#666;">保密</div>
<div class="t c" style="left:595px;top:334px;width:96px;font-size:14px;color:#6a6a6a;font-size:15.5px;transform:scaleX(0.915);margin-top:-1px">10</div>
<div class="t c" style="left:691px;top:334px;width:96px;font-size:14px;color:#6a6a6a;font-size:15.5px;transform:scaleX(0.915);margin-top:-1px">0</div>
<div class="t c" style="left:979px;top:334px;width:86px;font-size:14px;color:#666;">已绑定</div>
<div class="a" style="left:16px;top:373px;width:18px;height:18px;border:1px solid #cfcfcf;border-radius:2px;background:#fff"></div>
<div class="t c" style="left:231px;top:373px;width:96px;font-size:14px;color:#666;">www</div>
<div class="t c" style="left:327px;top:373px;width:121px;font-size:14px;color:#6a6a6a;font-size:15.5px;transform:scaleX(0.915);margin-top:-1px">13850082824</div>
<div class="t c" style="left:448px;top:373px;width:96px;font-size:14px;color:#666;">1111钻石</div>
<div class="t c" style="left:544px;top:373px;width:51px;font-size:14px;color:#666;">女</div>
<div class="t c" style="left:595px;top:373px;width:96px;font-size:14px;color:#6a6a6a;font-size:15.5px;transform:scaleX(0.915);margin-top:-1px">10</div>
<div class="t c" style="left:691px;top:373px;width:96px;font-size:14px;color:#6a6a6a;font-size:15.5px;transform:scaleX(0.915);margin-top:-1px">0</div>
<div class="t c" style="left:979px;top:373px;width:86px;font-size:14px;color:#666;">未绑定</div>
<div class="a" style="left:16px;top:412px;width:18px;height:18px;border:1px solid #cfcfcf;border-radius:2px;background:#fff"></div>
<div class="t c" style="left:231px;top:412px;width:96px;font-size:14px;color:#666;">kkk</div>
<div class="t c" style="left:327px;top:412px;width:121px;font-size:14px;color:#6a6a6a;font-size:15.5px;transform:scaleX(0.915);margin-top:-1px">13799748792</div>
<div class="t c" style="left:448px;top:412px;width:96px;font-size:14px;color:#666;">普通会员</div>
<div class="t c" style="left:544px;top:412px;width:51px;font-size:14px;color:#666;">男</div>
<div class="t c" style="left:595px;top:412px;width:96px;font-size:14px;color:#6a6a6a;font-size:15.5px;transform:scaleX(0.915);margin-top:-1px">4999</div>
<div class="t c" style="left:691px;top:412px;width:96px;font-size:14px;color:#6a6a6a;font-size:15.5px;transform:scaleX(0.915);margin-top:-1px">0</div>
<div class="t c" style="left:979px;top:412px;width:86px;font-size:14px;color:#666;">未绑定</div>
<svg style="left:167px;top:11px" width="10" height="19" viewBox="0 0 10 19"><path d="M0 0.5 H10 L5 5.5Z M0 18.5 H10 L5 13.5Z" fill="#bdbdbd"/></svg>
<svg style="left:668px;top:11px" width="10" height="19" viewBox="0 0 10 19"><path d="M0 0.5 H10 L5 5.5Z M0 18.5 H10 L5 13.5Z" fill="#bdbdbd"/></svg>
<svg style="left:777px;top:11px" width="10" height="19" viewBox="0 0 10 19"><path d="M0 0.5 H10 L5 5.5Z M0 18.5 H10 L5 13.5Z" fill="#bdbdbd"/></svg>
<div class="a" style="left:93px;top:45px;width:10px;height:10px;background:#f3f7fd"></div>
<div class="a" style="left:93px;top:55px;width:10px;height:10px;background:#dbe7f6"></div>
<div class="a" style="left:103px;top:45px;width:10px;height:10px;background:#eef4fb"></div>
<div class="a" style="left:103px;top:55px;width:10px;height:10px;background:#bcd5f0"></div>
<div class="a" style="left:113px;top:45px;width:10px;height:10px;background:#f0f5fc"></div>
<div class="a" style="left:113px;top:55px;width:10px;height:10px;background:#d3e2f5"></div>
<div class="a" style="left:123px;top:45px;width:10px;height:10px;background:#f4f8fd"></div>
<div class="a" style="left:123px;top:55px;width:10px;height:10px;background:#c8dcf3"></div>
<div class="a" style="left:133px;top:45px;width:10px;height:10px;background:#f6f9fd"></div>
<div class="a" style="left:133px;top:55px;width:10px;height:10px;background:#cddff4"></div>
<div class="a" style="left:143px;top:45px;width:10px;height:10px;background:#f8fafd"></div>
<div class="a" style="left:143px;top:55px;width:10px;height:10px;background:#d4e3f5"></div>
<div class="a" style="left:153px;top:45px;width:10px;height:10px;background:#e9f1fb"></div>
<div class="a" style="left:153px;top:55px;width:10px;height:10px;background:#d5e4f5"></div>
<div class="a" style="left:163px;top:45px;width:10px;height:10px;background:#ebf2fb"></div>
<div class="a" style="left:163px;top:55px;width:10px;height:10px;background:#c3d8f1"></div>
<div class="a" style="left:173px;top:45px;width:10px;height:10px;background:#eef4fb"></div>
<div class="a" style="left:173px;top:55px;width:10px;height:10px;background:#d0e1f4"></div>
<div class="a" style="left:123px;top:86px;width:10px;height:10px;background:#e8f0fa"></div>
<div class="a" style="left:123px;top:96px;width:10px;height:10px;background:#c9dcf2"></div>
<div class="a" style="left:133px;top:86px;width:10px;height:10px;background:#eaf2fb"></div>
<div class="a" style="left:133px;top:96px;width:10px;height:10px;background:#c7dbf2"></div>
<div class="a" style="left:143px;top:86px;width:10px;height:10px;background:#ecf3fb"></div>
<div class="a" style="left:143px;top:96px;width:10px;height:10px;background:#d0e1f4"></div>
<div class="a" style="left:153px;top:86px;width:10px;height:10px;background:#e5eef9"></div>
<div class="a" style="left:153px;top:96px;width:10px;height:10px;background:#cfe0f4"></div>
<div class="a" style="left:123px;top:125px;width:10px;height:10px;background:#dce5ef"></div>
<div class="a" style="left:123px;top:135px;width:10px;height:10px;background:#b5cde9"></div>
<div class="a" style="left:133px;top:125px;width:10px;height:10px;background:#dfe7f0"></div>
<div class="a" style="left:133px;top:135px;width:10px;height:10px;background:#b1cbe8"></div>
<div class="a" style="left:143px;top:125px;width:10px;height:10px;background:#e1e8f0"></div>
<div class="a" style="left:143px;top:135px;width:10px;height:10px;background:#c3d6ec"></div>
<div class="a" style="left:153px;top:125px;width:10px;height:10px;background:#dfe7f0"></div>
<div class="a" style="left:153px;top:135px;width:10px;height:10px;background:#c6d8ed"></div>
<div class="a" style="left:113px;top:166px;width:10px;height:10px;background:#e3edf9"></div>
<div class="a" style="left:113px;top:176px;width:10px;height:10px;background:#d5e4f6"></div>
<div class="a" style="left:123px;top:166px;width:10px;height:10px;background:#d6e5f6"></div>
<div class="a" style="left:123px;top:176px;width:10px;height:10px;background:#c9ddf3"></div>
<div class="a" style="left:133px;top:166px;width:10px;height:10px;background:#c9dcf3"></div>
<div class="a" style="left:133px;top:176px;width:10px;height:10px;background:#d9e7f7"></div>
<div class="a" style="left:143px;top:166px;width:10px;height:10px;background:#cfe0f4"></div>
<div class="a" style="left:143px;top:176px;width:10px;height:10px;background:#e0ebf8"></div>
<div class="a" style="left:153px;top:166px;width:10px;height:10px;background:#c5daf2"></div>
<div class="a" style="left:153px;top:176px;width:10px;height:10px;background:#d2e2f5"></div>
<div class="a" style="left:113px;top:206px;width:10px;height:10px;background:#f1f6fc"></div>
<div class="a" style="left:113px;top:216px;width:10px;height:10px;background:#c9dcf2"></div>
<div class="a" style="left:123px;top:206px;width:10px;height:10px;background:#f3f7fc"></div>
<div class="a" style="left:123px;top:216px;width:10px;height:10px;background:#c6daf2"></div>
<div class="a" style="left:133px;top:206px;width:10px;height:10px;background:#f3f7fd"></div>
<div class="a" style="left:133px;top:216px;width:10px;height:10px;background:#a9c9ee"></div>
<div class="a" style="left:143px;top:206px;width:10px;height:10px;background:#f2f7fd"></div>
<div class="a" style="left:143px;top:216px;width:10px;height:10px;background:#c7dbf2"></div>
<div class="a" style="left:153px;top:206px;width:10px;height:10px;background:#e9f1fb"></div>
<div class="a" style="left:153px;top:216px;width:10px;height:10px;background:#abcaee"></div>
<div class="a" style="left:93px;top:256px;width:10px;height:10px;background:#e4eefa"></div>
<div class="a" style="left:93px;top:266px;width:10px;height:10px;background:#f3f7fd"></div>
<div class="a" style="left:103px;top:256px;width:10px;height:10px;background:#c9ddf4"></div>
<div class="a" style="left:103px;top:266px;width:10px;height:10px;background:#e4edf9"></div>
<div class="a" style="left:113px;top:256px;width:10px;height:10px;background:#b9d3f0"></div>
<div class="a" style="left:113px;top:266px;width:10px;height:10px;background:#e6eff9"></div>
<div class="a" style="left:123px;top:256px;width:10px;height:10px;background:#c9dcf3"></div>
<div class="a" style="left:123px;top:266px;width:10px;height:10px;background:#f0f5fc"></div>
<div class="a" style="left:133px;top:256px;width:10px;height:10px;background:#d6e5f6"></div>
<div class="a" style="left:133px;top:266px;width:10px;height:10px;background:#eff5fc"></div>
<div class="a" style="left:143px;top:256px;width:10px;height:10px;background:#d5e4f6"></div>
<div class="a" style="left:143px;top:266px;width:10px;height:10px;background:#eaf1fb"></div>
<div class="a" style="left:153px;top:256px;width:10px;height:10px;background:#c3d8f2"></div>
<div class="a" style="left:153px;top:266px;width:10px;height:10px;background:#d6e5f6"></div>
<div class="a" style="left:163px;top:256px;width:10px;height:10px;background:#cfe0f4"></div>
<div class="a" style="left:163px;top:266px;width:10px;height:10px;background:#d9e7f7"></div>
<div class="a" style="left:173px;top:256px;width:10px;height:10px;background:#d0e1f4"></div>
<div class="a" style="left:173px;top:266px;width:10px;height:10px;background:#d9e7f7"></div>
<div class="a" style="left:93px;top:296px;width:10px;height:10px;background:#dbe8f7"></div>
<div class="a" style="left:93px;top:306px;width:10px;height:10px;background:#f6f9fd"></div>
<div class="a" style="left:103px;top:296px;width:10px;height:10px;background:#bcd4f0"></div>
<div class="a" style="left:103px;top:306px;width:10px;height:10px;background:#e6eff9"></div>
<div class="a" style="left:113px;top:296px;width:10px;height:10px;background:#cadcf3"></div>
<div class="a" style="left:113px;top:306px;width:10px;height:10px;background:#e9f1fa"></div>
<div class="a" style="left:123px;top:296px;width:10px;height:10px;background:#cfe0f4"></div>
<div class="a" style="left:123px;top:306px;width:10px;height:10px;background:#e8f0fa"></div>
<div class="a" style="left:133px;top:296px;width:10px;height:10px;background:#a9c9ee"></div>
<div class="a" style="left:133px;top:306px;width:10px;height:10px;background:#edf3fb"></div>
<div class="a" style="left:143px;top:296px;width:10px;height:10px;background:#c4d9f2"></div>
<div class="a" style="left:143px;top:306px;width:10px;height:10px;background:#e8f0fa"></div>
<div class="a" style="left:153px;top:296px;width:10px;height:10px;background:#bfd6f1"></div>
<div class="a" style="left:153px;top:306px;width:10px;height:10px;background:#e9f1fa"></div>
<div class="a" style="left:163px;top:296px;width:10px;height:10px;background:#cddff4"></div>
<div class="a" style="left:163px;top:306px;width:10px;height:10px;background:#ecf3fb"></div>
<div class="a" style="left:173px;top:296px;width:10px;height:10px;background:#c9dcf3"></div>
<div class="a" style="left:173px;top:306px;width:10px;height:10px;background:#d9e7f7"></div>
<div class="a" style="left:93px;top:336px;width:10px;height:10px;background:#e9f1fb"></div>
<div class="a" style="left:93px;top:346px;width:10px;height:10px;background:#f8fafd"></div>
<div class="a" style="left:103px;top:336px;width:10px;height:10px;background:#d9e7f7"></div>
<div class="a" style="left:103px;top:346px;width:10px;height:10px;background:#f3f7fd"></div>
<div class="a" style="left:113px;top:336px;width:10px;height:10px;background:#d5e4f6"></div>
<div class="a" style="left:113px;top:346px;width:10px;height:10px;background:#f2f7fd"></div>
<div class="a" style="left:123px;top:336px;width:10px;height:10px;background:#dbe8f7"></div>
<div class="a" style="left:123px;top:346px;width:10px;height:10px;background:#f5f8fd"></div>
<div class="a" style="left:133px;top:336px;width:10px;height:10px;background:#b4d0f0"></div>
<div class="a" style="left:133px;top:346px;width:10px;height:10px;background:#e6eff9"></div>
<div class="a" style="left:143px;top:336px;width:10px;height:10px;background:#a8c8ee"></div>
<div class="a" style="left:143px;top:346px;width:10px;height:10px;background:#e9f1fb"></div>
<div class="a" style="left:153px;top:336px;width:10px;height:10px;background:#bbd4f0"></div>
<div class="a" style="left:153px;top:346px;width:10px;height:10px;background:#e9f1fa"></div>
<div class="a" style="left:163px;top:336px;width:10px;height:10px;background:#b5d0f0"></div>
<div class="a" style="left:163px;top:346px;width:10px;height:10px;background:#f4f8fd"></div>
<div class="a" style="left:173px;top:336px;width:10px;height:10px;background:#a3c5ed"></div>
<div class="a" style="left:173px;top:346px;width:10px;height:10px;background:#eaf1fb"></div>
<div class="a" style="left:123px;top:376px;width:10px;height:10px;background:#bfd7f1"></div>
<div class="a" style="left:123px;top:386px;width:10px;height:10px;background:#f3f7fd"></div>
<div class="a" style="left:133px;top:376px;width:10px;height:10px;background:#bfd6f1"></div>
<div class="a" style="left:133px;top:386px;width:10px;height:10px;background:#eff5fc"></div>
<div class="a" style="left:143px;top:376px;width:10px;height:10px;background:#c6daf2"></div>
<div class="a" style="left:143px;top:386px;width:10px;height:10px;background:#e9f1fb"></div>
<div class="a" style="left:153px;top:376px;width:10px;height:10px;background:#e8f0fa"></div>
<div class="a" style="left:153px;top:386px;width:10px;height:10px;background:#f8fafd"></div>
<div class="a" style="left:63px;top:416px;width:10px;height:10px;background:#e3edf9"></div>
<div class="a" style="left:63px;top:426px;width:10px;height:10px;background:#f4f4f6"></div>
<div class="a" style="left:73px;top:416px;width:10px;height:10px;background:#a9c9ee"></div>
<div class="a" style="left:73px;top:426px;width:10px;height:10px;background:#f4f4f6"></div>
<div class="a" style="left:83px;top:416px;width:10px;height:10px;background:#bcd5f0"></div>
<div class="a" style="left:83px;top:426px;width:10px;height:10px;background:#f4f4f6"></div>
<div class="a" style="left:93px;top:416px;width:10px;height:10px;background:#a8c8ee"></div>
<div class="a" style="left:93px;top:426px;width:10px;height:10px;background:#f4f4f6"></div>
<div class="a" style="left:103px;top:416px;width:10px;height:10px;background:#c3d8f1"></div>
<div class="a" style="left:103px;top:426px;width:10px;height:10px;background:#f4f4f6"></div>
<div class="a" style="left:113px;top:416px;width:10px;height:10px;background:#a3c5ed"></div>
<div class="a" style="left:113px;top:426px;width:10px;height:10px;background:#f4f4f6"></div>
<div class="a" style="left:123px;top:416px;width:10px;height:10px;background:#bcd5f0"></div>
<div class="a" style="left:123px;top:426px;width:10px;height:10px;background:#f4f4f6"></div>
<div class="a" style="left:133px;top:416px;width:10px;height:10px;background:#a5c6ed"></div>
<div class="a" style="left:133px;top:426px;width:10px;height:10px;background:#f4f4f6"></div>
<div class="a" style="left:143px;top:416px;width:10px;height:10px;background:#c0d7f1"></div>
<div class="a" style="left:143px;top:426px;width:10px;height:10px;background:#f4f4f6"></div>
<div class="a" style="left:153px;top:416px;width:10px;height:10px;background:#a5c6ed"></div>
<div class="a" style="left:153px;top:426px;width:10px;height:10px;background:#f4f4f6"></div>
<div class="a" style="left:163px;top:416px;width:10px;height:10px;background:#bed6f1"></div>
<div class="a" style="left:163px;top:426px;width:10px;height:10px;background:#f4f4f6"></div>
<div class="a" style="left:173px;top:416px;width:10px;height:10px;background:#a5c6ed"></div>
<div class="a" style="left:173px;top:426px;width:10px;height:10px;background:#f4f4f6"></div>
<div class="a" style="left:183px;top:416px;width:10px;height:10px;background:#bcd5f0"></div>
<div class="a" style="left:183px;top:426px;width:10px;height:10px;background:#f4f4f6"></div>
<div class="a" style="left:193px;top:416px;width:10px;height:10px;background:#a5c6ed"></div>
<div class="a" style="left:193px;top:426px;width:10px;height:10px;background:#f4f4f6"></div>
<div class="a" style="left:203px;top:416px;width:10px;height:10px;background:#d9e7f7"></div>
<div class="a" style="left:203px;top:426px;width:10px;height:10px;background:#f4f4f6"></div>
<div class="a" style="left:85px;top:78px;width:112px;height:1px;background:rgba(255,255,255,.9)"></div>
<div class="a" style="left:117px;top:117px;width:39px;height:1px;background:rgba(255,255,255,.9)"></div>
<div class="a" style="left:115px;top:156px;width:54px;height:1px;background:rgba(255,255,255,.9)"></div>
<div class="a" style="left:96px;top:195px;width:76px;height:1px;background:rgba(255,255,255,.9)"></div>
<div class="a" style="left:96px;top:245px;width:76px;height:1px;background:rgba(255,255,255,.9)"></div>
<div class="a" style="left:59px;top:284px;width:129px;height:1px;background:rgba(255,255,255,.9)"></div>
<div class="a" style="left:64px;top:323px;width:132px;height:1px;background:rgba(255,255,255,.9)"></div>
<div class="a" style="left:116px;top:362px;width:107px;height:1px;background:rgba(255,255,255,.9)"></div>
<div class="a" style="left:73px;top:401px;width:143px;height:1px;background:rgba(255,255,255,.9)"></div>
<div class="a" style="left:63px;top:426px;width:150px;height:4px;background:#f4f4f6"></div>
<div class="a" style="left:126px;top:416px;width:1px;height:3px;background:#2a6ad0"></div>
<div class="a" style="left:126px;top:424px;width:1px;height:3px;background:#2a6ad0"></div>
</div>
</body></html>
